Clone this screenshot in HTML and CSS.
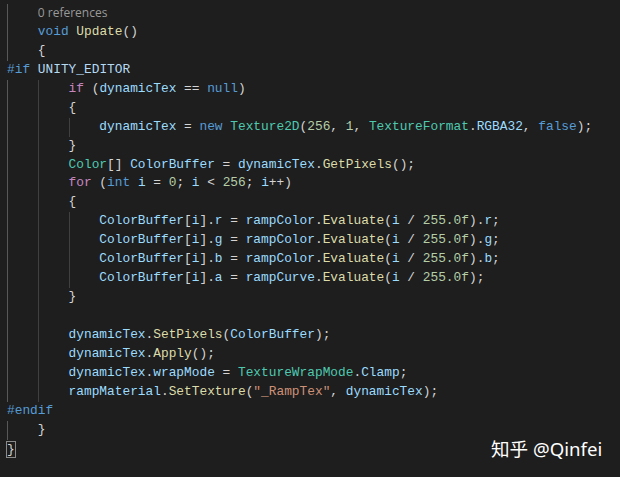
FILE: index.html
```html
<!DOCTYPE html>
<html>
<head>
<meta charset="utf-8">
<link rel="stylesheet" href="styles.css">
</head>
<body>
<div class="editor">
  <div class="line lens"><span class="ind g0"></span><span class="lens-text">0 references</span></div>
  <div class="line"><span class="ind g0"></span><span class="kw">void</span> <span class="fn">Update</span>()</div>
  <div class="line"><span class="ind g0"></span>{</div>
  <div class="line"><span class="kw">#if</span> <span class="sym">UNITY_EDITOR</span></div>
  <div class="line"><span class="ind g0"></span><span class="ind"></span><span class="ctl">if</span> (<span class="var">dynamicTex</span> == <span class="kw">null</span>)</div>
  <div class="line"><span class="ind g0"></span><span class="ind"></span>{</div>
  <div class="line"><span class="ind g0"></span><span class="ind"></span><span class="ind"></span><span class="var">dynamicTex</span> = <span class="kw">new</span> <span class="ty">Texture2D</span>(<span class="num">256</span>, <span class="num">1</span>, <span class="ty">TextureFormat</span>.<span class="var">RGBA32</span>, <span class="kw">false</span>);</div>
  <div class="line"><span class="ind g0"></span><span class="ind"></span>}</div>
  <div class="line"><span class="ind g0"></span><span class="ind"></span><span class="ty">Color</span>[] <span class="var">ColorBuffer</span> = <span class="var">dynamicTex</span>.<span class="fn">GetPixels</span>();</div>
  <div class="line"><span class="ind g0"></span><span class="ind"></span><span class="ctl">for</span> (<span class="kw">int</span> <span class="var">i</span> = <span class="num">0</span>; <span class="var">i</span> &lt; <span class="num">256</span>; <span class="var">i</span>++)</div>
  <div class="line"><span class="ind g0"></span><span class="ind"></span>{</div>
  <div class="line"><span class="ind g0"></span><span class="ind"></span><span class="ind"></span><span class="var">ColorBuffer</span>[<span class="var">i</span>].<span class="var">r</span> = <span class="var">rampColor</span>.<span class="fn">Evaluate</span>(<span class="var">i</span> / <span class="num">255.0f</span>).<span class="var">r</span>;</div>
  <div class="line"><span class="ind g0"></span><span class="ind"></span><span class="ind"></span><span class="var">ColorBuffer</span>[<span class="var">i</span>].<span class="var">g</span> = <span class="var">rampColor</span>.<span class="fn">Evaluate</span>(<span class="var">i</span> / <span class="num">255.0f</span>).<span class="var">g</span>;</div>
  <div class="line"><span class="ind g0"></span><span class="ind"></span><span class="ind"></span><span class="var">ColorBuffer</span>[<span class="var">i</span>].<span class="var">b</span> = <span class="var">rampColor</span>.<span class="fn">Evaluate</span>(<span class="var">i</span> / <span class="num">255.0f</span>).<span class="var">b</span>;</div>
  <div class="line"><span class="ind g0"></span><span class="ind"></span><span class="ind"></span><span class="var">ColorBuffer</span>[<span class="var">i</span>].<span class="var">a</span> = <span class="var">rampCurve</span>.<span class="fn">Evaluate</span>(<span class="var">i</span> / <span class="num">255.0f</span>);</div>
  <div class="line"><span class="ind g0"></span><span class="ind"></span>}</div>
  <div class="line"><span class="ind g0"></span><span class="ind"></span></div>
  <div class="line"><span class="ind g0"></span><span class="ind"></span><span class="var">dynamicTex</span>.<span class="fn">SetPixels</span>(<span class="var">ColorBuffer</span>);</div>
  <div class="line"><span class="ind g0"></span><span class="ind"></span><span class="var">dynamicTex</span>.<span class="fn">Apply</span>();</div>
  <div class="line"><span class="ind g0"></span><span class="ind"></span><span class="var">dynamicTex</span>.<span class="var">wrapMode</span> = <span class="ty">TextureWrapMode</span>.<span class="var">Clamp</span>;</div>
  <div class="line"><span class="ind g0"></span><span class="ind"></span><span class="var">rampMaterial</span>.<span class="fn">SetTexture</span>(<span class="str">"_RampTex"</span>, <span class="var">dynamicTex</span>);</div>
  <div class="line"><span class="kw">#endif</span></div>
  <div class="line"><span class="ind g0"></span>}</div>
  <div class="line"><span class="match">}</span></div>
</div>
<div class="watermark">知乎 @Qinfei</div>
</body>
</html>
```

FILE: styles.css
```css
html, body {
  margin: 0;
  padding: 0;
  background: #1e1e1e;
  width: 620px;
  height: 477px;
  overflow: hidden;
}

body {
  position: relative;
}

.editor {
  padding: 4px 0 0 7px;
  font-family: "Liberation Mono", "DejaVu Sans Mono", monospace;
  font-size: 12.83px;
  color: #d4d4d4;
}

.line {
  height: 18.95px;
  line-height: 18.95px;
  white-space: pre;
}

.ind {
  display: inline-block;
  width: 4ch;
  height: 18.95px;
  vertical-align: top;
  background: linear-gradient(#404040, #404040) 0 0 / 1px 100% no-repeat;
}

.ind.g0 {
  background-image: linear-gradient(#585858, #585858);
}

.lens-text {
  font-family: "Open Sans", "Noto Sans", sans-serif;
  font-size: 12px;
  color: #999999;
}

.kw { color: #569cd6; }
.ctl { color: #c586c0; }
.fn { color: #dcdcaa; }
.ty { color: #4ec9b0; }
.var { color: #9cdcfe; }
.sym { color: #b5d9f2; }
.num { color: #b5cea8; }
.str { color: #ce9178; }

.match {
  display: inline-block;
  box-sizing: border-box;
  height: 17px;
  line-height: 15px;
  vertical-align: top;
  margin-top: 1px;
  margin-left: -1px;
  width: calc(1ch + 2px);
  border: 1px solid #8a8a8a;
  text-align: center;
}

.watermark {
  position: absolute;
  left: 491px;
  top: 437px;
  font-family: "Noto Sans", "Noto Sans CJK SC", sans-serif;
  font-size: 18.6px;
  line-height: 24px;
  color: #ffffff;
  white-space: nowrap;
}
```
